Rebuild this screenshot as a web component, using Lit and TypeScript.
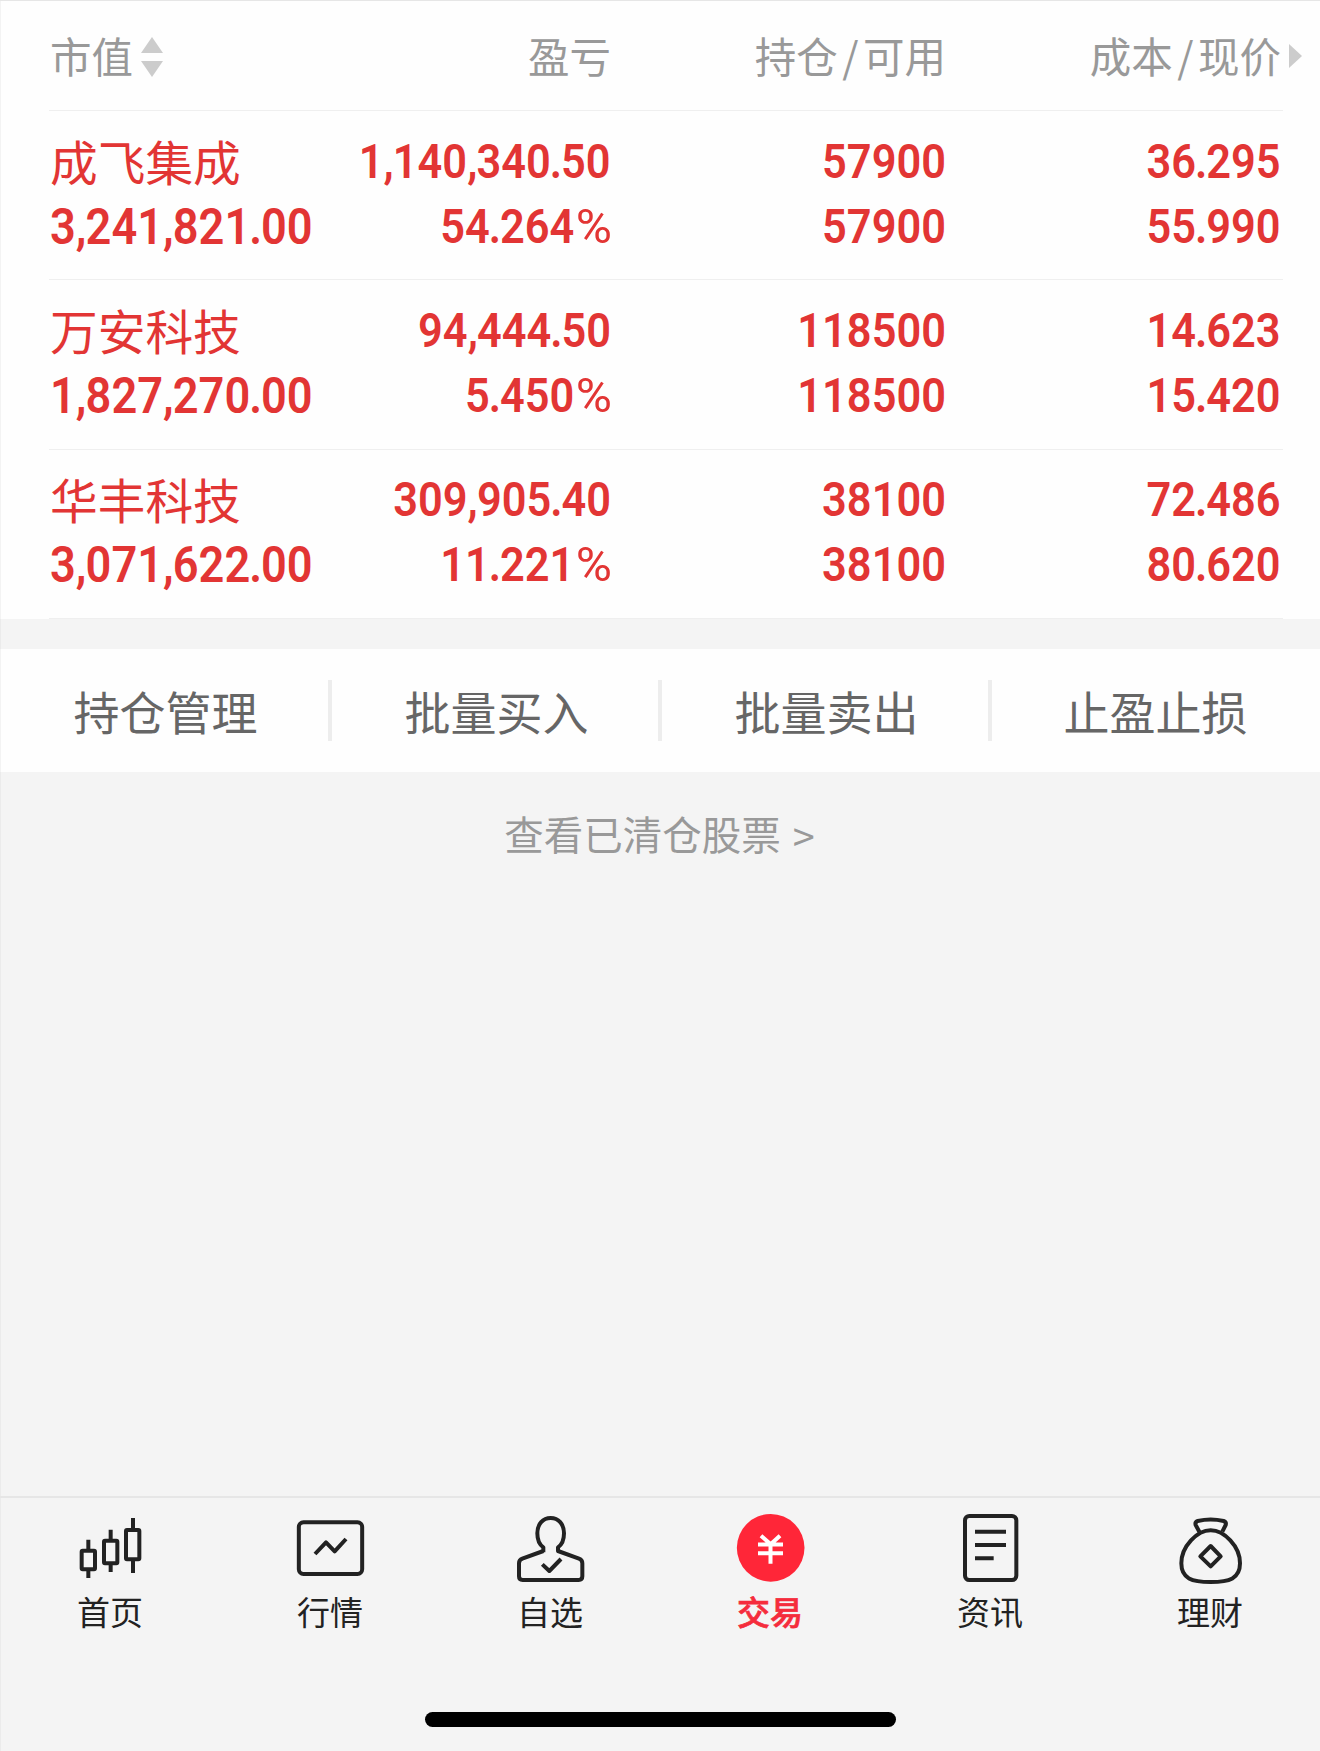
import { LitElement, html, css, svg } from "lit";
import { customElement, property } from "lit/decorators.js";

interface Holding {
  name: string;
  value: string;
  profit: string;
  rate: string;
  held: string;
  usable: string;
  cost: string;
  price: string;
}

const HOLDINGS: Holding[] = [
  { name: "成飞集成", value: "3,241,821.00", profit: "1,140,340.50", rate: "54.264%", held: "57900", usable: "57900", cost: "36.295", price: "55.990" },
  { name: "万安科技", value: "1,827,270.00", profit: "94,444.50", rate: "5.450%", held: "118500", usable: "118500", cost: "14.623", price: "15.420" },
  { name: "华丰科技", value: "3,071,622.00", profit: "309,905.40", rate: "11.221%", held: "38100", usable: "38100", cost: "72.486", price: "80.620" },
];

const ACTIONS = ["持仓管理", "批量买入", "批量卖出", "止盈止损"];

const ICONS: Record<string, unknown> = {
  home: svg`
    <g class="line">
      <rect x="125" y="212" width="40" height="56" rx="3"/>
      <path d="M145 179V212M145 268V294"/>
      <rect x="192" y="182" width="40" height="68" rx="3"/>
      <path d="M212 149V182M212 250V276"/>
      <rect x="258" y="150" width="40" height="88" rx="3"/>
      <path d="M279 114V150M279 238V279"/>
    </g>`,
  market: svg`
    <g class="line">
      <rect x="116.500" y="127" width="190" height="155" rx="14"/>
      <path d="M165 222L198 187L224 214L258 177"/>
    </g>`,
  watch: svg`
    <g class="line">
      <path d="M190 217V202Q172 190 172 160C172 132 189 114 212 114C235 114 252 132 252 160Q252 190 234 202V213L297 236Q307 240 307 250V289Q307 300 296 300H128Q117 300 117 289V250Q117 240 127 236L190 213"/>
      <path d="M187 253L208 273L243 237"/>
    </g>`,
  trade: svg`
    <circle class="disc" cx="212" cy="203.500" r="101.500"/>
    <path class="yen" d="M183 167L212 193L240 167M174 193.500H249M174 219.500H249M211.500 191V251"/>`,
  news: svg`
    <g class="line">
      <rect x="135" y="108" width="154" height="192" rx="13"/>
      <path d="M165 155H258M165 195H258M165 235H221"/>
    </g>`,
  wealth: svg`
    <g class="line">
      <path d="M178 155L167 135Q164 126 173 123Q212 114 251 123Q260 126 257 135L247 155"/>
      <path d="M212 151C252 151 300 199 300 250C300 296 268 306 212 306C156 306 124 296 124 250C124 199 172 151 212 151Z"/>
      <path d="M212 198L242 229L212 259L181 229Z"/>
    </g>`,
};

const TABS = [
  { icon: "home", label: "首页" },
  { icon: "market", label: "行情" },
  { icon: "watch", label: "自选" },
  { icon: "trade", label: "交易", active: true },
  { icon: "news", label: "资讯" },
  { icon: "wealth", label: "理财" },
];

const MARK_CLASS: Record<string, string> = { ",": "comma", ".": "dot", "%": "pct" };

/* Splits a figure so that its punctuation can be set tighter than its digits. */
const figure = (text: string) =>
  html`<span class="num">${text.split(/([,.%])/).map((part) =>
    MARK_CLASS[part] ? html`<span class=${MARK_CLASS[part]}>${part}</span>` : part)}</span>`;

@customElement("holding-row")
export class HoldingRow extends LitElement {
  @property({ attribute: false }) item!: Holding;

  static styles = css`
    :host {
      display: grid;
      grid-template-columns: 277px 285px 335px 335px;
      height: 169.330px;
      box-sizing: border-box;
      border-bottom: 1px solid #efefef;
      padding-top: 17.600px;
      color: #e23534;
    }
    .cell {
      display: flex;
      flex-direction: column;
      align-items: flex-end;
    }
    .first { align-items: flex-start; padding-left: 1px; }
    .name {
      height: 65px;
      line-height: 63px;
      font-size: 47.700px;
      font-weight: 400;
      white-space: nowrap;
    }
    .num {
      display: block;
      height: 65px;
      line-height: 65px;
      font-family: Roboto, sans-serif;
      font-size: 49px;
      font-weight: 600;
      white-space: nowrap;
      transform: scaleX(0.885);
      transform-origin: right center;
    }
    .first .num { transform: scaleX(0.895); transform-origin: left center; font-size: 50.500px; }
    .comma { letter-spacing: -1px; }
    .dot { margin: 0 -1.200px; }
    .pct {
      display: inline-block;
      font-weight: 400;
      margin-left: 6px;
      transform: scaleX(1.14);
      transform-origin: right center;
    }
  `;

  render() {
    const h = this.item;
    return html`
      <div class="cell first"><span class="name">${h.name}</span>${figure(h.value)}</div>
      <div class="cell">${figure(h.profit)}${figure(h.rate)}</div>
      <div class="cell">${figure(h.held)}${figure(h.usable)}</div>
      <div class="cell">${figure(h.cost)}${figure(h.price)}</div>
    `;
  }
}

@customElement("app-root")
export class AppRoot extends LitElement {
  static styles = css`
    :host {
      display: flex;
      flex-direction: column;
      box-sizing: border-box;
      width: 1320px;
      height: 1751px;
      background: #f4f4f4;
      font-family: "Noto Sans CJK SC", sans-serif;
      box-shadow: inset 1px 0 #ebebeb;
      overflow: hidden;
    }
    .table {
      box-sizing: border-box;
      height: 619px;
      padding: 0 37px 0 49px;
      background: #fefefe;
      border-top: 1px solid #e6e6e6;
      box-shadow: inset 1px 0 #f3f3f3;
    }
    .head {
      display: grid;
      grid-template-columns: 277px 285px 335px 335px 25px;
      box-sizing: border-box;
      height: 110px;
      border-bottom: 1px solid #efefef;
      color: #999;
      font-size: 41.500px;
      line-height: 109px;
      text-align: right;
      white-space: nowrap;
    }
    .sortable { display: flex; height: 109px; align-items: center; gap: 8px; padding-left: 1px; }
    .sort { width: 22px; height: 40px; fill: #ccc; margin-top: 2px; }
    .slash { padding: 0 4.500px; }
    .more { width: 13px; height: 24px; fill: #ccc; align-self: center; margin: 1px 0 0 8px; }
    .actions {
      display: grid;
      grid-template-columns: 332px 330px 330px 328px;
      align-items: center;
      height: 123px;
      margin-top: 30px;
      background: #fefefe;
      box-shadow: inset 1px 0 #f3f3f3;
    }
    .action {
      box-sizing: border-box;
      height: 61px;
      padding-left: 3px;
      line-height: 60px;
      text-align: center;
      font-size: 46px;
      color: #666;
      border-right: 4px solid #ededed;
    }
    .action:last-child { border-right-color: transparent; }
    .closed {
      margin-top: 31px;
      padding-right: 1px;
      line-height: 60px;
      text-align: center;
      font-size: 39.500px;
      color: #999;
    }
    .arrow { display: inline-block; margin-left: 3px; line-height: 40px; vertical-align: -2px; }
    .tabs {
      box-sizing: border-box;
      display: flex;
      margin-top: auto;
      height: 216px;
      border-top: 2px solid #e6e6e6;
    }
    .tab {
      flex: 1;
      display: flex;
      flex-direction: column;
      align-items: center;
      padding-top: 12px;
      color: #222;
      font-size: 33px;
      line-height: 43px;
    }
    .icon { width: 80px; height: 80px; }
    .line { fill: none; stroke: #222; stroke-width: 12; stroke-linejoin: round; }
    .disc { fill: #ff2638; }
    .yen { fill: none; stroke: #fff; stroke-width: 12; }
    .active { color: #f52c3c; font-weight: 500; }
    .active span { -webkit-text-stroke: 0.700px #f52c3c; }
    .foot { display: flex; justify-content: center; height: 39px; }
    .pill { width: 471px; height: 15px; border-radius: 8px; background: #000; }
  `;

  render() {
    return html`
      <div class="table">
        <div class="head">
          <span class="sortable">市值<svg class="sort" viewBox="0 0 22 40"><path d="M11 0L22 16H0ZM0 24H22L11 40Z"/></svg></span>
          <span>盈亏</span>
          <span>持仓<span class="slash">/</span>可用</span>
          <span>成本<span class="slash">/</span>现价</span>
          <svg class="more" viewBox="0 0 13 24"><path d="M0 0L13 12L0 24Z"/></svg>
        </div>
        ${HOLDINGS.map((h) => html`<holding-row .item=${h}></holding-row>`)}
      </div>
      <div class="actions">${ACTIONS.map((a) => html`<div class="action">${a}</div>`)}</div>
      <div class="closed">查看已清仓股票 <span class="arrow">&gt;</span></div>
      <div class="tabs">
        ${TABS.map((t) => html`
          <div class="tab ${t.active ? "active" : ""}">
            <svg class="icon" viewBox="90 90 240 240">${ICONS[t.icon]}</svg>
            <span>${t.label}</span>
          </div>`)}
      </div>
      <div class="foot"><div class="pill"></div></div>
    `;
  }
}
